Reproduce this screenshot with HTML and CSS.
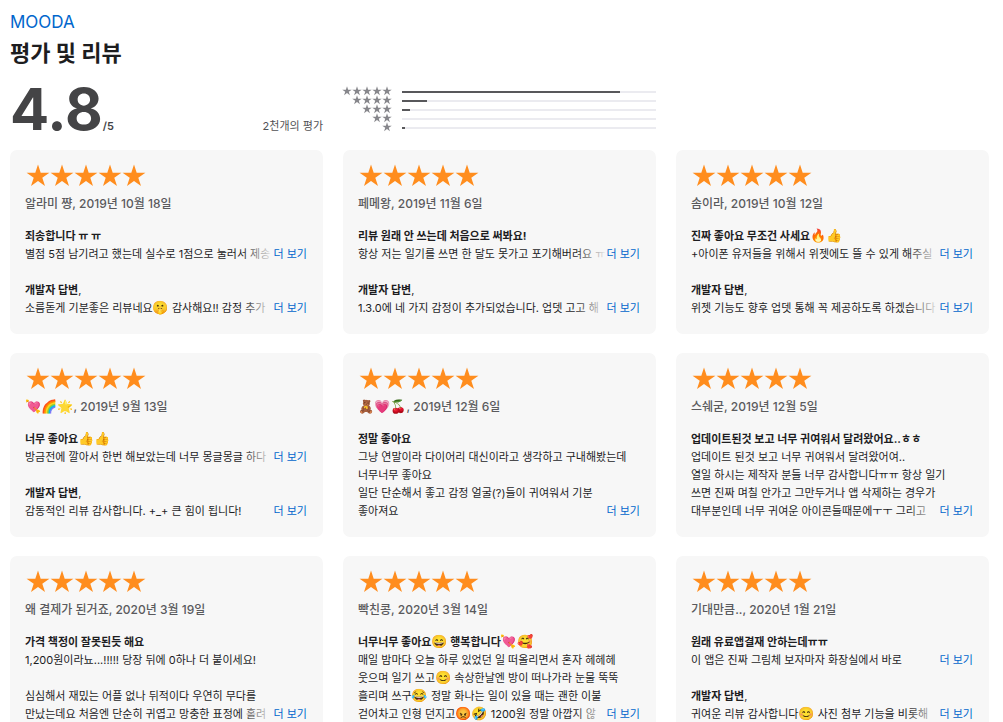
FILE: index.html
```html
<!DOCTYPE html>
<html lang="ko">
<head>
<meta charset="utf-8">
<meta name="viewport" content="width=device-width, initial-scale=1">
<title>MOODA - 평가 및 리뷰</title>
<link rel="stylesheet" href="styles.css">
</head>
<body>
<svg class="defs" aria-hidden="true">
  <symbol id="star" viewBox="0 0 24 24"><path d="M12 .4 14.7 8.7H23.4L16.3 13.8 19 22.1 12 17 5 22.1 7.7 13.8 .6 8.7H9.3Z"/></symbol>
  <symbol id="stars" viewBox="0 0 120 24">
    <use href="#star" width="24" height="24"/><use href="#star" x="24" width="24" height="24"/><use href="#star" x="48" width="24" height="24"/><use href="#star" x="72" width="24" height="24"/><use href="#star" x="96" width="24" height="24"/>
  </symbol>
</svg>
<main class="page">
  <header class="heading">
    <a class="app-link" href="#">MOODA</a>
    <h1 class="title">평가 및 리뷰</h1>
  </header>

  <section class="summary">
    <div class="score">
      <div><span class="score-value">4.8</span><span class="score-max">/5</span></div>
      <span class="score-count">2천개의 평가</span>
    </div>
    <div class="bars">
      <div class="bar-row"><span class="bar-stars"><svg><use href="#star"/></svg><svg><use href="#star"/></svg><svg><use href="#star"/></svg><svg><use href="#star"/></svg><svg><use href="#star"/></svg></span><span class="track"><span class="fill" style="width:86%"></span></span></div>
      <div class="bar-row"><span class="bar-stars"><svg><use href="#star"/></svg><svg><use href="#star"/></svg><svg><use href="#star"/></svg><svg><use href="#star"/></svg></span><span class="track"><span class="fill" style="width:10%"></span></span></div>
      <div class="bar-row"><span class="bar-stars"><svg><use href="#star"/></svg><svg><use href="#star"/></svg><svg><use href="#star"/></svg></span><span class="track"><span class="fill" style="width:3%"></span></span></div>
      <div class="bar-row"><span class="bar-stars"><svg><use href="#star"/></svg><svg><use href="#star"/></svg></span><span class="track"><span class="fill" style="width:0%"></span></span></div>
      <div class="bar-row"><span class="bar-stars"><svg><use href="#star"/></svg></span><span class="track"><span class="fill" style="width:1%"></span></span></div>
    </div>
  </section>

  <section class="reviews">
    <article class="card">
      <svg class="stars" role="img" aria-label="별점 5점"><use href="#stars"/></svg>
      <p class="meta">알라미 쨩, 2019년 10월 18일</p>
      <h2 class="subject">죄송합니다 ㅠ ㅠ</h2>
      <div class="text">별점 5점 남기려고 했는데 실수로 1점으로 눌러서 제송<button class="more" type="button">더 보기</button></div>
      <h3 class="reply">개발자 답변<span class="comma">,</span></h3>
      <div class="text">소름돋게 기분좋은 리뷰네요<span class="emoji">🤫</span> 감사해요!! 감정 추가<button class="more" type="button">더 보기</button></div>
    </article>
    <article class="card">
      <svg class="stars" role="img" aria-label="별점 5점"><use href="#stars"/></svg>
      <p class="meta">페메왕, 2019년 11월 6일</p>
      <h2 class="subject">리뷰 원래 안 쓰는데 처음으로 써봐요!</h2>
      <div class="text">항상 저는 일기를 쓰면 한 달도 못가고 포기해버려요 ㅠ<button class="more" type="button">더 보기</button></div>
      <h3 class="reply">개발자 답변<span class="comma">,</span></h3>
      <div class="text">1.3.0에 네 가지 감정이 추가되었습니다. 업뎃 고고 해<button class="more" type="button">더 보기</button></div>
    </article>
    <article class="card">
      <svg class="stars" role="img" aria-label="별점 5점"><use href="#stars"/></svg>
      <p class="meta">솜이라, 2019년 10월 12일</p>
      <h2 class="subject">진짜 좋아요 무조건 사세요<span class="emoji">🔥👍</span></h2>
      <div class="text">+아이폰 유저들을 위해서 위젯에도 뜰 수 있게 해주실<button class="more" type="button">더 보기</button></div>
      <h3 class="reply">개발자 답변<span class="comma">,</span></h3>
      <div class="text">위젯 기능도 향후 업뎃 통해 꼭 제공하도록 하겠습니다<button class="more" type="button">더 보기</button></div>
    </article>

    <article class="card">
      <svg class="stars" role="img" aria-label="별점 5점"><use href="#stars"/></svg>
      <p class="meta"><span class="emoji">💘🌈🌟</span>, 2019년 9월 13일</p>
      <h2 class="subject">너무 좋아요<span class="emoji">👍👍</span></h2>
      <div class="text">방금전에 깔아서 한번 해보았는데 너무 몽글몽글 하다<button class="more" type="button">더 보기</button></div>
      <h3 class="reply">개발자 답변<span class="comma">,</span></h3>
      <div class="text">감동적인 리뷰 감사합니다. +_+ 큰 힘이 됩니다!<button class="more" type="button">더 보기</button></div>
    </article>
    <article class="card">
      <svg class="stars" role="img" aria-label="별점 5점"><use href="#stars"/></svg>
      <p class="meta"><span class="emoji">🧸💗🍒</span>, 2019년 12월 6일</p>
      <h2 class="subject">정말 좋아요</h2>
      <div class="text">그냥 연말이라 다이어리 대신이라고 생각하고 구내해봤는데<br>너무너무 좋아요<br>일단 단순해서 좋고 감정 얼굴(?)들이 귀여워서 기분<br>좋아져요<button class="more" type="button">더 보기</button></div>
    </article>
    <article class="card">
      <svg class="stars" role="img" aria-label="별점 5점"><use href="#stars"/></svg>
      <p class="meta">스쉐굳, 2019년 12월 5일</p>
      <h2 class="subject">업데이트된것 보고 너무 귀여워서 달려왔어요..ㅎㅎ</h2>
      <div class="text">업데이트 된것 보고 너무 귀여워서 달려왔어여..<br>열일 하시는 제작자 분들 너무 감사합니다ㅠㅠ 항상 일기<br>쓰면 진짜 며칠 안가고 그만두거나 앱 삭제하는 경우가<br>대부분인데 너무 귀여운 아이콘들때문에ㅜㅜ 그리고<button class="more" type="button">더 보기</button></div>
    </article>

    <article class="card">
      <svg class="stars" role="img" aria-label="별점 5점"><use href="#stars"/></svg>
      <p class="meta">왜 결제가 된거죠, 2020년 3월 19일</p>
      <h2 class="subject">가격 책정이 잘못된듯 해요</h2>
      <div class="text">1,200원이라뇨...!!!!! 당장 뒤에 0하나 더 붙이세요!<br><br>심심해서 재밌는 어플 없나 뒤적이다 우연히 무다를<br>만났는데요 처음엔 단순히 귀엽고 망충한 표정에 홀려<button class="more" type="button">더 보기</button></div>
    </article>
    <article class="card">
      <svg class="stars" role="img" aria-label="별점 5점"><use href="#stars"/></svg>
      <p class="meta">빡친콩, 2020년 3월 14일</p>
      <h2 class="subject">너무너무 좋아요<span class="emoji">😄</span> 행복합니다<span class="emoji">💘🥰</span></h2>
      <div class="text">매일 밤마다 오늘 하루 있었던 일 떠올리면서 혼자 헤헤헤<br>웃으며 일기 쓰고<span class="emoji">😊</span> 속상한날엔 방이 떠나가라 눈물 뚝뚝<br>흘리며 쓰구<span class="emoji">😂</span> 정말 화나는 일이 있을 때는 괜한 이불<br>걷어차고 인형 던지고<span class="emoji">😡🤣</span> 1200원 정말 아깝지 않<button class="more" type="button">더 보기</button></div>
    </article>
    <article class="card">
      <svg class="stars" role="img" aria-label="별점 5점"><use href="#stars"/></svg>
      <p class="meta">기대만큼.., 2020년 1월 21일</p>
      <h2 class="subject">원래 유료앱결재 안하는데ㅠㅠ</h2>
      <div class="text">이 앱은 진짜 그림체 보자마자 화장실에서 바로<button class="more" type="button">더 보기</button></div>
      <h3 class="reply">개발자 답변<span class="comma">,</span></h3>
      <div class="text">귀여운 리뷰 감사합니다<span class="emoji">😊</span> 사진 첨부 기능을 비롯해<button class="more" type="button">더 보기</button></div>
    </article>
  </section>
</main>
</body>
</html>
```
FILE: styles.css
```css
* {
  box-sizing: border-box;
}

body {
  margin: 0;
  background: #fff;
  color: #1d1d1f;
  font-family: Inter, "Noto Sans CJK KR", sans-serif;
  font-size: 11px;
  line-height: 18px;
}

h1, h2, h3, p {
  margin: 0;
}

.defs {
  position: absolute;
  width: 0;
  height: 0;
}

.page {
  padding: 10px 14px 20px 10px;
}

.heading {
  display: flex;
  flex-direction: column;
  align-items: flex-start;
  margin-bottom: 8px;
}

.app-link {
  color: #06c;
  font-size: 17px;
  line-height: 24px;
  text-decoration: none;
}

.title {
  color: #1d1d1f;
  font-size: 22px;
  font-weight: 700;
  line-height: 39px;
}

.summary,
.reviews {
  display: grid;
  grid-template-columns: repeat(3, minmax(0, 1fr));
  column-gap: 20px;
}

.summary {
  height: 57px;
  margin-bottom: 12px;
}

.score {
  display: flex;
  justify-content: space-between;
  align-items: baseline;
  color: #444446;
}

.score-value {
  font-size: 58px;
  font-weight: 700;
  line-height: 57px;
}

.score-max {
  font-size: 11px;
  font-weight: 600;
}

.score-count {
  color: #515154;
  font-size: 11px;
}

.bars {
  padding-top: 6px;
}

.bar-row {
  display: flex;
  align-items: center;
  gap: 10px;
  height: 9px;
}

.bar-stars {
  display: flex;
  justify-content: flex-end;
  width: 49px;
  height: 11px;
  flex: none;
  fill: #86868b;
}

.bar-stars svg {
  width: 10px;
  height: 10px;
  flex: none;
}

.track {
  flex: 1;
  height: 2px;
  background: #ebebf0;
}

.fill {
  display: block;
  height: 2px;
  background: #58585b;
}

.reviews {
  row-gap: 19px;
}

.card {
  padding: 14px 16px 17px 15px;
  border-radius: 7px;
  background: #f7f7f7;
  white-space: nowrap;
}

.stars {
  display: block;
  width: 120px;
  height: 24px;
  margin: 0 0 7px 1px;
  fill: #ff8d1e;
}

.meta {
  height: 18px;
  margin-bottom: 14px;
  color: #5a5a5d;
  font-size: 12px;
  font-weight: 500;
}

.subject,
.reply {
  height: 18px;
  font-size: 11px;
  font-weight: 700;
}

.reply {
  margin-top: 18px;
}

.comma {
  font-weight: 400;
}

.text {
  position: relative;
}

.emoji {
  font-family: "Noto Color Emoji", sans-serif;
  font-size: 13px;
  line-height: 1;
}

.more {
  position: absolute;
  right: 0;
  bottom: 0;
  padding: 0;
  border: 0;
  background: #f7f7f7;
  color: #06c;
  font: inherit;
  cursor: pointer;
}

.more::before {
  content: "";
  position: absolute;
  top: 0;
  right: 100%;
  width: 32px;
  height: 100%;
  background: linear-gradient(to right, rgba(247, 247, 247, 0), #f7f7f7);
}
```
